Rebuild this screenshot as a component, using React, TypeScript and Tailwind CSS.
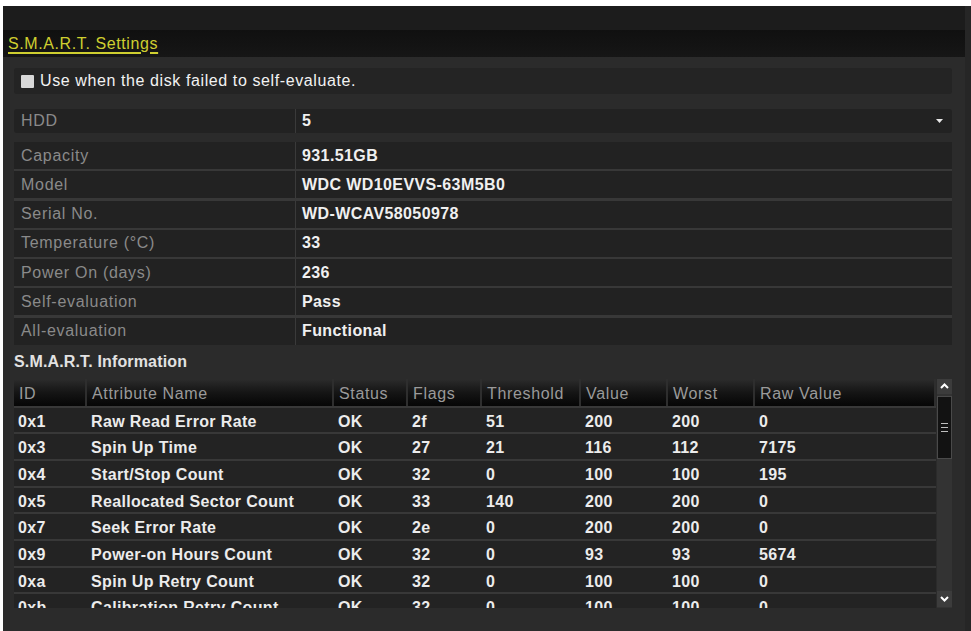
import React from "react";

const info: [string, string][] = [
  ["Capacity", "931.51GB"],
  ["Model", "WDC WD10EVVS-63M5B0"],
  ["Serial No.", "WD-WCAV58050978"],
  ["Temperature (°C)", "33"],
  ["Power On (days)", "236"],
  ["Self-evaluation", "Pass"],
  ["All-evaluation", "Functional"],
];

const cols = [
  { name: "ID", w: "w-[73px]" },
  { name: "Attribute Name", w: "w-[247px]" },
  { name: "Status", w: "w-[74px]" },
  { name: "Flags", w: "w-[74px]" },
  { name: "Threshold", w: "w-[99px]" },
  { name: "Value", w: "w-[87px]" },
  { name: "Worst", w: "w-[87px]" },
  { name: "Raw Value", w: "flex-1" },
];

const rows: string[][] = [
  ["0x1", "Raw Read Error Rate", "OK", "2f", "51", "200", "200", "0"],
  ["0x3", "Spin Up Time", "OK", "27", "21", "116", "112", "7175"],
  ["0x4", "Start/Stop Count", "OK", "32", "0", "100", "100", "195"],
  ["0x5", "Reallocated Sector Count", "OK", "33", "140", "200", "200", "0"],
  ["0x7", "Seek Error Rate", "OK", "2e", "0", "200", "200", "0"],
  ["0x9", "Power-on Hours Count", "OK", "32", "0", "93", "93", "5674"],
  ["0xa", "Spin Up Retry Count", "OK", "32", "0", "100", "100", "0"],
  ["0xb", "Calibration Retry Count", "OK", "32", "0", "100", "100", "0"],
];

export default function App() {
  return (
    <div
      className="w-[971px] h-[631px] bg-white pt-[6px] pl-[3px] overflow-hidden"
      style={{ fontFamily: '"Liberation Sans", Arial, sans-serif' }}
    >
      <div className="h-full bg-[#2b2b2b] flex flex-col border-r-[6px] border-[#262626]">
        {/* title bar */}
        <div className="h-[24px] bg-[#1c1c1c] shrink-0" />
        <div className="h-[27px] bg-gradient-to-b from-[#101010] to-[#161616] shrink-0 flex items-center pl-[5px]">
          <span className="text-[#cfcf30] text-[16px] tracking-[0.6px] underline underline-offset-[3px] decoration-[2px] leading-none">
            S.M.A.R.T. Settings
          </span>
        </div>

        <div className="flex-1 pl-[11px] pr-[13px] pt-[11px] flex flex-col">
          {/* checkbox row */}
          <div className="h-[26px] bg-[#242424] rounded-[3px] flex items-center pl-[7px] gap-[6px]">
            <div className="w-[13px] h-[13px] bg-[#d8d8d8] rounded-[1px]" />
            <span className="text-[#f2f2f2] text-[16px] tracking-[0.6px]">
              Use when the disk failed to self-evaluate.
            </span>
          </div>

          {/* HDD row */}
          <div className="mt-[15px] h-[24px] bg-[#222222] rounded-[3px] flex items-stretch">
            <div className="w-[282px] border-r border-[#3a3a3a] flex items-center pl-[7px] text-[#8a8a8a] text-[16px] tracking-[0.7px]">
              HDD
            </div>
            <div className="flex-1 flex items-center pl-[6px] pr-[8px] text-[#f0f0f0] text-[16px] font-bold">
              <span className="flex-1">5</span>
              <svg width="9" height="6" viewBox="0 0 9 6">
                <path d="M1 1 L8 1 L4.5 5 Z" fill="#e8e8e8" />
              </svg>
            </div>
          </div>

          {/* info rows */}
          <div className="mt-[9px] flex flex-col gap-[2.3px] bg-[#383838] rounded-[3px]">
            {info.map(([k, v]) => (
              <div key={k} className="h-[27px] bg-[#222222] flex items-stretch">
                <div className="w-[282px] border-r border-[#3a3a3a] flex items-center pl-[7px] text-[#8a8a8a] text-[16px] tracking-[0.7px]">
                  {k}
                </div>
                <div className="flex-1 flex items-center pl-[6px] text-[#f0f0f0] text-[16px] font-bold tracking-[0.4px]">
                  {v}
                </div>
              </div>
            ))}
          </div>

          <div className="mt-[8px] h-[18px] flex items-center text-[#e2e2e2] text-[16px] font-bold tracking-[0.15px]">
            S.M.A.R.T. Information
          </div>

          {/* table */}
          <div className="mt-[8px] flex h-[229px] overflow-hidden">
            <div className="w-[923px] flex flex-col overflow-hidden">
              <div className="h-[27px] shrink-0 flex bg-gradient-to-b from-[#2c2c2c] via-[#151515] to-[#060606]">
                {cols.map((c) => (
                  <div
                    key={c.name}
                    className={`${c.w} shrink-0 border-r-[2px] border-[#2e2e2e] flex items-center pl-[5px] pt-[3px] text-[#9a9a9a] text-[16px] tracking-[0.65px]`}
                  >
                    {c.name}
                  </div>
                ))}
              </div>
              <div className="flex flex-col gap-[2px] pt-[2px] bg-[#383838]">
                {rows.map((r) => (
                  <div key={r[0]} className="h-[24.67px] shrink-0 bg-[#232323] flex">
                    {r.map((cell, i) => (
                      <div
                        key={i}
                        className={`${cols[i].w} shrink-0 flex items-center pl-[4px] pt-[3px] text-[#ececec] text-[16px] font-bold tracking-[0.35px]`}
                      >
                        {cell}
                      </div>
                    ))}
                  </div>
                ))}
              </div>
            </div>
            {/* scrollbar */}
            <div className="w-[15px] bg-[#333333] flex flex-col justify-between ml-[1px]">
              <div className="flex flex-col">
                <div className="h-[15px] bg-[#3c3c3c] flex items-center justify-center">
                  <svg width="9" height="6" viewBox="0 0 9 6">
                    <path d="M1 5 L4.5 1.5 L8 5" stroke="#ffffff" strokeWidth="2" fill="none" />
                  </svg>
                </div>
                <div className="mt-[2px] h-[63px] bg-[#121212] border border-[#4a4a4a] flex flex-col items-center justify-center gap-[3px]">
                  <div className="w-[7px] h-[1px] bg-[#bdbdbd]" />
                  <div className="w-[7px] h-[1px] bg-[#bdbdbd]" />
                  <div className="w-[7px] h-[1px] bg-[#bdbdbd]" />
                </div>
              </div>
              <div className="h-[16px] bg-[#3c3c3c] flex items-center justify-center mb-[1px]">
                <svg width="9" height="6" viewBox="0 0 9 6">
                  <path d="M1 1 L4.5 4.5 L8 1" stroke="#ffffff" strokeWidth="2" fill="none" />
                </svg>
              </div>
            </div>
          </div>
        </div>
      </div>
    </div>
  );
}
